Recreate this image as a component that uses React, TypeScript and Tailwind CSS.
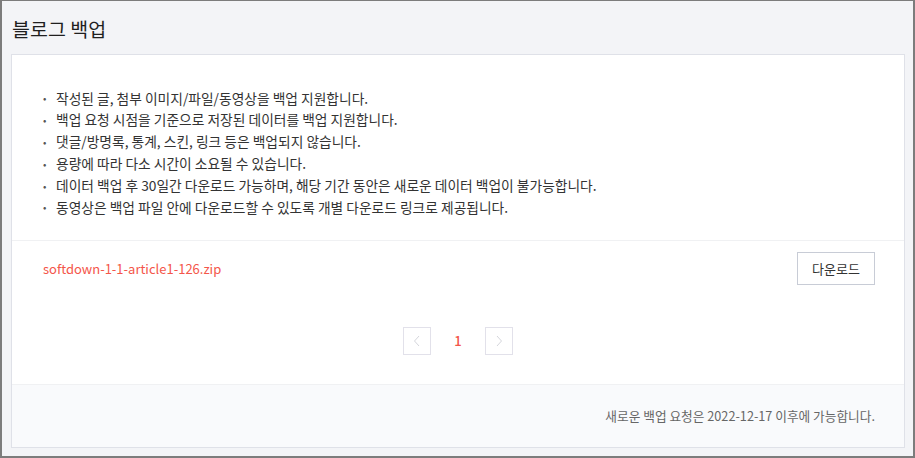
const notices = [
  "작성된 글, 첨부 이미지/파일/동영상을 백업 지원합니다.",
  "백업 요청 시점을 기준으로 저장된 데이터를 백업 지원합니다.",
  "댓글/방명록, 통계, 스킨, 링크 등은 백업되지 않습니다.",
  "용량에 따라 다소 시간이 소요될 수 있습니다.",
  "데이터 백업 후 30일간 다운로드 가능하며, 해당 기간 동안은 새로운 데이터 백업이 불가능합니다.",
  "동영상은 백업 파일 안에 다운로드할 수 있도록 개별 다운로드 링크로 제공됩니다.",
];

export default function App() {
  return (
    <div
      className="w-[915px] h-[458px] bg-[#f3f4f7] border-t border-l-2 border-r-2 border-b-2 border-[#7c7c7c] flex flex-col overflow-hidden"
      style={{ fontFamily: '"Noto Sans CJK KR", "Noto Sans", sans-serif' }}
    >
      <div className="h-[53px] pl-[10px] flex items-center">
        <h1 className="text-[19.5px] text-[#1f1f1f] leading-none pt-[3px]">블로그 백업</h1>
      </div>

      <div className="ml-[9px] mr-[8px] h-[394px] bg-white border border-[#dfe1e8] flex flex-col">
        <ul className="pt-[32px] pb-[22px] pl-[31px] pr-[29px] border-b border-[#f0f1f3]">
          {notices.map((text) => (
            <li key={text} className="flex items-center h-[21.8px] text-[13.75px] text-[#333]">
              <span className="w-[13px] text-[10px] text-[#555]">•</span>
              <span>{text}</span>
            </li>
          ))}
        </ul>

        <div className="pt-[11px] pb-[29px] px-[29px] pl-[31px] border-b border-[#f0f1f3]">
          <div className="flex items-center justify-between">
            <a className="text-[13px] text-[#f4564a]">softdown-1-1-article1-126.zip</a>
            <button className="w-[78px] h-[33px] border border-[#c8ccd6] bg-white text-[13px] text-[#333]">
              다운로드
            </button>
          </div>
          <div className="mt-[42px] flex items-center justify-center gap-[22px] pr-[2px]">
            <span className="w-[28px] h-[28px] border border-[#e2e1ea] flex items-center justify-center">
              <svg width="8" height="12" viewBox="0 0 8 12" fill="none" stroke="#d5d6dc" strokeWidth="1">
                <path d="M6 1 L1.5 6 L6 11" />
              </svg>
            </span>
            <span className="w-[10px] text-center text-[13px] font-medium text-[#f4564a]">1</span>
            <span className="w-[28px] h-[28px] border border-[#e2e1ea] flex items-center justify-center">
              <svg width="8" height="12" viewBox="0 0 8 12" fill="none" stroke="#d5d6dc" strokeWidth="1">
                <path d="M2 1 L6.5 6 L2 11" />
              </svg>
            </span>
          </div>
        </div>

        <div className="flex-1 bg-[#f9fafc] flex items-center justify-end pr-[29px]">
          <span className="text-[12.7px] text-[#666]">새로운 백업 요청은 2022-12-17 이후에 가능합니다.</span>
        </div>
      </div>
    </div>
  );
}
